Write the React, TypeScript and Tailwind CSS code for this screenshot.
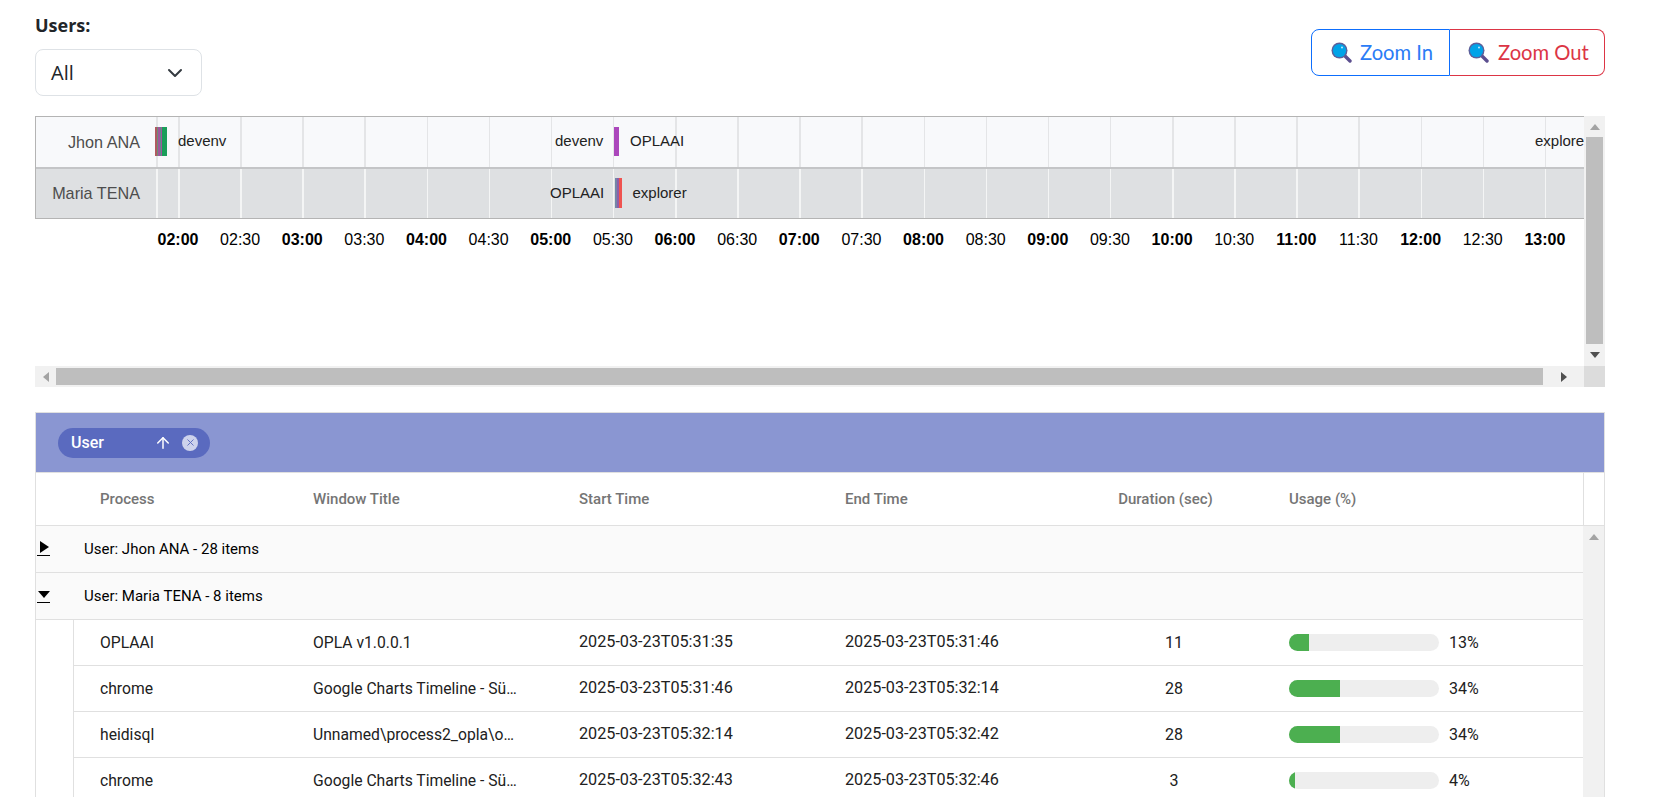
import { ChevronDown, ArrowUp, X } from 'lucide-react';

const TICKS = ['02:00', '02:30', '03:00', '03:30', '04:00', '04:30', '05:00', '05:30', '06:00', '06:30', '07:00', '07:30', '08:00', '08:30', '09:00', '09:30', '10:00', '10:30', '11:00', '11:30', '12:00', '12:30', '13:00'];

// plot area starts at x=156, first tick at x=178, 62.13px per half hour
const tickX = (i: number) => 22 + i * 62.13;

const ROWS = [
  { process: 'OPLAAI', title: 'OPLA v1.0.0.1', start: '2025-03-23T05:31:35', end: '2025-03-23T05:31:46', dur: 11, usage: 13 },
  { process: 'chrome', title: 'Google Charts Timeline - Süreç Notları', start: '2025-03-23T05:31:46', end: '2025-03-23T05:32:14', dur: 28, usage: 34 },
  { process: 'heidisql', title: 'Unnamed\\process2_opla\\opla_activity', start: '2025-03-23T05:32:14', end: '2025-03-23T05:32:42', dur: 28, usage: 34 },
  { process: 'chrome', title: 'Google Charts Timeline - Süreç Notları', start: '2025-03-23T05:32:43', end: '2025-03-23T05:32:46', dur: 3, usage: 4 },
];

function Lens() {
  return (
    <svg width="21" height="21" viewBox="0 0 21 21" className="shrink-0">
      <path d="M13 13l6 6" stroke="#5c4f8f" strokeWidth="3.4" strokeLinecap="round" />
      <circle cx="8.5" cy="8.5" r="8" fill="#5c5f9a" />
      <circle cx="8.5" cy="8.5" r="6.6" fill="#00a3e8" />
      <circle cx="11" cy="5.5" r="1" fill="#bfeaff" />
    </svg>
  );
}

function Tri({ dir, color }: { dir: 'up' | 'down' | 'left' | 'right'; color: string }) {
  const pts = { up: '5,0 10,6 0,6', down: '0,0 10,0 5,6', left: '6,0 6,10 0,5', right: '0,0 0,10 6,5' }[dir];
  const horizontal = dir === 'up' || dir === 'down';
  return (
    <svg width={horizontal ? 10 : 6} height={horizontal ? 6 : 10}>
      <polygon points={pts} fill={color} />
    </svg>
  );
}

function GridLines({ color }: { color: string }) {
  return (
    <>
      <div className="absolute top-0 bottom-0 left-0 w-[1.5px]" style={{ backgroundColor: color }} />
      {TICKS.map((t, i) => (
        <div key={t} className="absolute top-0 bottom-0 w-[1.5px]" style={{ left: tickX(i), backgroundColor: color }} />
      ))}
    </>
  );
}

function BarLabel({ x, text }: { x: number; text: string }) {
  return (
    <span className="absolute top-[15px] text-[15px] leading-[18px] text-[#222]" style={{ left: x - 156 }}>
      {text}
    </span>
  );
}

function Timeline() {
  return (
    <div className="flex h-[271px] flex-col">
      <div className="flex h-[250px]">
        <div className="relative flex-1 overflow-hidden font-['Liberation_Sans',Arial,sans-serif]">
          <div className="border-y border-l border-[#b4b4b4]">
            <div className="flex h-[50px] bg-[#f8f9fb]">
              <div className="flex w-[120px] items-center justify-end pr-[16px] text-[16.2px] text-[#4d4d4d] whitespace-nowrap">Jhon ANA</div>
              <div className="relative flex-1">
                <GridLines color="#e4e5e7" />
                <div className="absolute top-[10px] left-[-1px] flex h-[29px] w-[12px]">
                  <div className="w-[2px] bg-[#b05a5f]" />
                  <div className="w-[1px] bg-[#6f8a78]" />
                  <div className="w-[2px] bg-[#a0569c]" />
                  <div className="w-[1px] bg-[#5b8f86]" />
                  <div className="w-[1px] bg-[#a0569c]" />
                  <div className="flex-1 bg-[#1b9e5a]" />
                </div>
                <div className="absolute top-[10px] left-[458px] h-[29px] w-[5px] bg-[#ab47bc]" />
                <BarLabel x={178} text="devenv" />
                <BarLabel x={555} text="devenv" />
                <BarLabel x={630} text="OPLAAI" />
                <BarLabel x={1535} text="explorer" />
              </div>
            </div>
            <div className="flex h-[51px] border-t-2 border-[#c4c5c7] bg-[#dee0e2]">
              <div className="flex w-[120px] items-center justify-end pr-[16px] text-[16.2px] text-[#4d4d4d] whitespace-nowrap">Maria TENA</div>
              <div className="relative flex-1">
                <GridLines color="#f4f5f5" />
                <div className="absolute top-[9px] left-[459px] flex h-[30px] w-[7px]">
                  <div className="w-[2px] bg-[#7486a8]" />
                  <div className="w-[2px] bg-[#8e5fa8]" />
                  <div className="flex-1 bg-[#ef5350]" />
                </div>
                <BarLabel x={550} text="OPLAAI" />
                <BarLabel x={632.5} text="explorer" />
              </div>
            </div>
          </div>
          <div className="relative ml-[121px] h-[40px]">
            {TICKS.map((t, i) => (
              <span
                key={t}
                className={`absolute top-[12px] -translate-x-1/2 text-[16px] leading-[18px] text-black ${i % 2 === 0 ? 'font-bold' : 'font-normal'}`}
                style={{ left: tickX(i) }}
              >
                {t}
              </span>
            ))}
          </div>
        </div>
        <div className="flex w-[21px] flex-col items-center bg-[#f1f1f1]">
          <div className="flex h-[21px] items-center justify-center">
            <Tri dir="up" color="#a3a3a3" />
          </div>
          <div className="h-[207px] w-[17px] bg-[#bebebe]" />
          <div className="flex flex-1 items-center justify-center">
            <Tri dir="down" color="#505050" />
          </div>
        </div>
      </div>
      <div className="flex h-[21px]">
        <div className="flex flex-1 items-center bg-[#f1f1f1]">
          <div className="flex w-[21px] justify-center">
            <Tri dir="left" color="#a3a3a3" />
          </div>
          <div className="h-[17px] w-[1487px] bg-[#bebebe]" />
          <div className="flex flex-1 justify-center">
            <Tri dir="right" color="#505050" />
          </div>
        </div>
        <div className="w-[21px] bg-[#dcdcdc]" />
      </div>
    </div>
  );
}

function Expander({ open }: { open?: boolean }) {
  return (
    <div className="flex w-[13px] flex-col items-center border-b border-black pb-[2px]">
      <svg width="12" height="12" viewBox="0 0 12 12">
        <polygon points={open ? '0,3 12,3 6,10' : '2,0 11,6 2,12'} fill="#000" />
      </svg>
    </div>
  );
}

function GroupRow({ label, open }: { label: string; open?: boolean }) {
  return (
    <div className="flex h-[47px] items-center border-b border-[#e0e0e0] bg-[#fafafa] pl-[1px]">
      <div className="w-[47px] pb-[1px]">
        <Expander open={open} />
      </div>
      <span className="text-[15px] text-black">{label}</span>
    </div>
  );
}

function DataGrid() {
  return (
    <div className="mt-[25px] border-x border-t border-[#e0e0e0] font-['Roboto',sans-serif]">
      <div className="flex h-[60px] items-center border-b border-[#e0e0e0] bg-[#8a96d2] pl-[22px]">
        <div className="flex h-[30px] w-[152px] items-center rounded-full bg-[#5a6abf] pl-[13px] text-[16px] font-medium text-white">
          <span className="flex-1">User</span>
          <ArrowUp size={18} strokeWidth={2} className="mr-[10px]" />
          <span className="mr-[12px] flex h-[16px] w-[16px] items-center justify-center rounded-full bg-[#cdd2ec]">
            <X size={11} strokeWidth={2} className="text-[#5a6abf]" />
          </span>
        </div>
      </div>

      <div className="flex h-[53px] border-b border-[#e0e0e0]">
        <div className="w-[37px]" />
        <div className="grid flex-1 grid-cols-[213px_267px_266px_267px_176px_1fr] items-center text-[15px] font-medium text-[#757575]">
          <span className="pl-[27px]">Process</span>
          <span className="pl-[27px]">Window Title</span>
          <span className="pl-[26px]">Start Time</span>
          <span className="pl-[26px]">End Time</span>
          <span className="pr-[17px] text-center">Duration (sec)</span>
          <span className="pl-[27px]">Usage (%)</span>
        </div>
        <div className="w-[21px] border-l border-[#e0e0e0]" />
      </div>

      <div className="flex">
        <div className="flex-1">
          <GroupRow label="User: Jhon ANA - 28 items" />
          <GroupRow label="User: Maria TENA - 8 items" open />
          <div className="ml-[37px] border-l border-[#e0e0e0]">
            {ROWS.map((r, i) => (
              <div key={i} className="grid h-[46px] grid-cols-[213px_267px_266px_267px_176px_1fr] items-center border-b border-[#e0e0e0] text-[16px] text-[#212121]">
                <span className="pl-[26px] text-[15.7px]">{r.process}</span>
                <span className="pl-[26px] text-[15.7px]">
                  <span className="block w-[207px] truncate">{r.title}</span>
                </span>
                <span className="pl-[25px] text-[16.2px]">{r.start}</span>
                <span className="pl-[25px] text-[16.2px]">{r.end}</span>
                <span className="pr-[2px] text-center">{r.dur}</span>
                <div className="flex items-center pl-[26px]">
                  <div className="h-[17px] w-[150px] overflow-hidden rounded-full bg-[#eeeeee]">
                    <div className="h-full bg-[#4caf50]" style={{ width: `${r.usage}%` }} />
                  </div>
                  <span className="ml-[10px]">{r.usage}%</span>
                </div>
              </div>
            ))}
          </div>
        </div>
        <div className="flex w-[21px] justify-center bg-[#f1f1f1] pt-[8px]">
          <Tri dir="up" color="#a3a3a3" />
        </div>
      </div>
    </div>
  );
}

export default function App() {
  return (
    <div className="h-[797px] overflow-hidden bg-white pl-[35px]">
      <div className="w-[1570px]">
        <div className="flex h-[116px] items-start justify-between">
          <div>
            <label className="mt-[13px] block font-['Open_Sans',sans-serif] text-[18px] leading-[24px] font-bold text-[#212529]">Users:</label>
            <div className="mt-[12px] flex h-[47px] w-[167px] items-center justify-between rounded-lg border border-[#dee2e6] pr-[14px] pl-[15px] font-['Open_Sans',sans-serif] text-[20px] text-[#212529]">
              <span>All</span>
              <ChevronDown size={24} strokeWidth={2} className="text-[#343a40]" />
            </div>
          </div>
          <div className="mt-[29px] flex font-['Lato',sans-serif] text-[20.2px]">
            <button className="flex h-[47px] w-[139px] items-center gap-[8px] rounded-l-lg border border-[#0d6efd] pb-[1px] pl-[19px] text-[#2b7cf6]">
              <Lens />
              Zoom In
            </button>
            <button className="flex h-[47px] w-[155px] items-center gap-[9px] rounded-r-lg border border-l-0 border-[#dc3545] pb-[1px] pl-[18px] text-[#dc3545]">
              <Lens />
              Zoom Out
            </button>
          </div>
        </div>
        <Timeline />
        <DataGrid />
      </div>
    </div>
  );
}
